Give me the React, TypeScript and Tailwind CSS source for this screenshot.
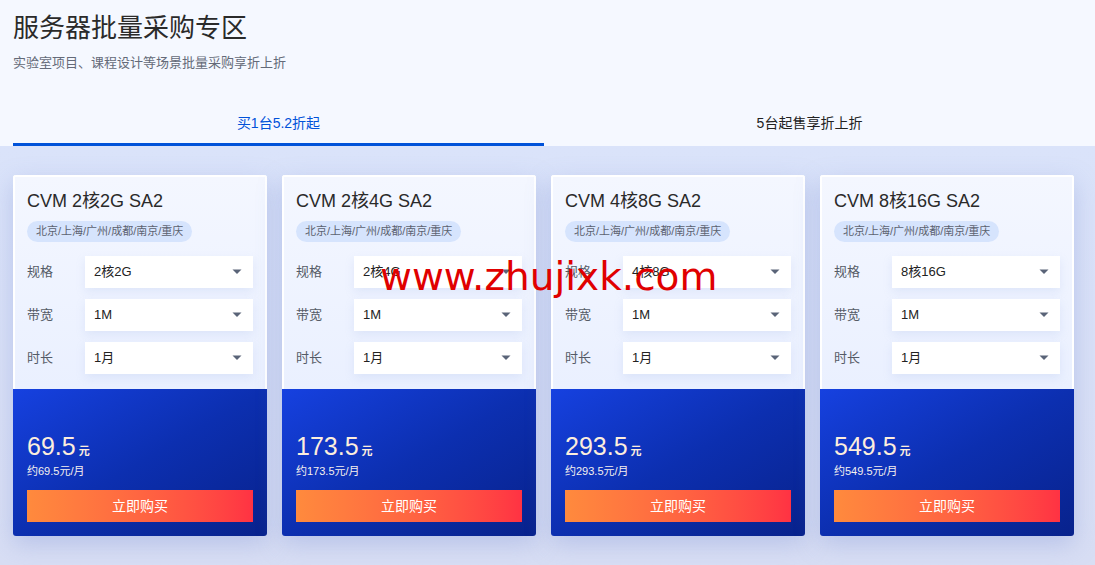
import React from "react";

const cards = [
  { name: "CVM 2核2G SA2", spec: "2核2G", price: "69.5" },
  { name: "CVM 2核4G SA2", spec: "2核4G", price: "173.5" },
  { name: "CVM 4核8G SA2", spec: "4核8G", price: "293.5" },
  { name: "CVM 8核16G SA2", spec: "8核16G", price: "549.5" },
];

function Caret() {
  return (
    <svg width="10" height="6" viewBox="0 0 10 6" className="shrink-0">
      <path d="M0.5 0.5 H9.5 L5 5 Z" fill="#5a6478" />
    </svg>
  );
}

function Row({ label, value }: { label: string; value: string }) {
  return (
    <div className="flex items-center">
      <div className="w-[58px] text-[13px] text-[#555b66]">{label}</div>
      <div className="flex h-[32px] flex-1 items-center justify-between bg-white pl-[9px] pr-[11px] text-[13px] text-[#222] shadow-[0_4px_10px_rgba(150,170,220,0.18)]">
        <span>{value}</span>
        <Caret />
      </div>
    </div>
  );
}

function Card({ name, spec, price }: { name: string; spec: string; price: string }) {
  return (
    <div className="flex h-[361px] flex-col overflow-hidden rounded-[3px] shadow-[0_8px_24px_rgba(120,140,210,0.35)]">
      <div className="flex h-[214px] flex-col border-x-2 border-t-2 border-white bg-gradient-to-b from-[#f4f7ff] to-[#eaf0ff] px-[12px] pt-[11px]">
        <div className="text-[18px] leading-[26px] text-[#2a2a2a]">{name}</div>
        <div className="mt-[7px] flex">
          <span className="rounded-full bg-[#d6e4fd] px-[9px] text-[11px] leading-[21px] text-[#5c6270]">
            北京/上海/广州/成都/南京/重庆
          </span>
        </div>
        <div className="mt-[14px] flex flex-col gap-[11px]">
          <Row label="规格" value={spec} />
          <Row label="带宽" value="1M" />
          <Row label="时长" value="1月" />
        </div>
      </div>
      <div className="flex flex-1 flex-col bg-gradient-to-br from-[#1641e0] via-[#0c2fb0] to-[#08228c] px-[14px] pt-[42px]">
        <div className="flex items-baseline text-[#fdeedd]">
          <span className="text-[25px] leading-[30px]">{price}</span>
          <span className="ml-[3px] text-[11px] font-bold">元</span>
        </div>
        <div className="mt-[2px] text-[11px] leading-[16px] text-[#f5f0ee]">约{price}元/月</div>
        <div className="mt-[11px] flex h-[32px] items-center justify-center bg-gradient-to-r from-[#ff8a3d] to-[#ff3243] text-[14px] text-white">
          立即购买
        </div>
      </div>
    </div>
  );
}

export default function App() {
  return (
    <div
      className="relative h-[565px] w-[1095px] overflow-hidden bg-[#dde4f8]"
      style={{ fontFamily: '"Liberation Sans", "Noto Sans CJK SC", sans-serif' }}
    >
      <div className="bg-[#f5f8ff] pl-[13px] pr-[20px]">
        <div className="pt-[11px] text-[26px] leading-[34px] text-[#2a2a2a]">服务器批量采购专区</div>
        <div className="mt-[9px] text-[13px] leading-[18px] text-[#646a78]">实验室项目、课程设计等场景批量采购享折上折</div>
        <div className="mt-[28px] flex h-[46px]">
          <div className="flex flex-1 items-center justify-center border-b-[3px] border-[#0052d9] pt-[3px] text-[14px] text-[#0052d9]">
            买1台5.2折起
          </div>
          <div className="flex flex-1 items-center justify-center border-b-[3px] border-transparent pt-[3px] text-[14px] text-[#222]">
            5台起售享折上折
          </div>
        </div>
      </div>
      <div className="bg-gradient-to-b from-[#dae3fa] to-[#d8def4] px-[13px] pt-[29px] pb-[30px]">
        <div className="grid grid-cols-4 gap-[15px] pr-[8px]">
          {cards.map((c) => (
            <Card key={c.name} {...c} />
          ))}
        </div>
      </div>
      <div
        className="pointer-events-none absolute left-[380px] top-[250px] text-[39px] leading-[54px] text-[#e00000]"
        style={{ fontFamily: '"Comic Sans MS", "DejaVu Sans", sans-serif' }}
      >
        www.zhujixk.com
      </div>
    </div>
  );
}
